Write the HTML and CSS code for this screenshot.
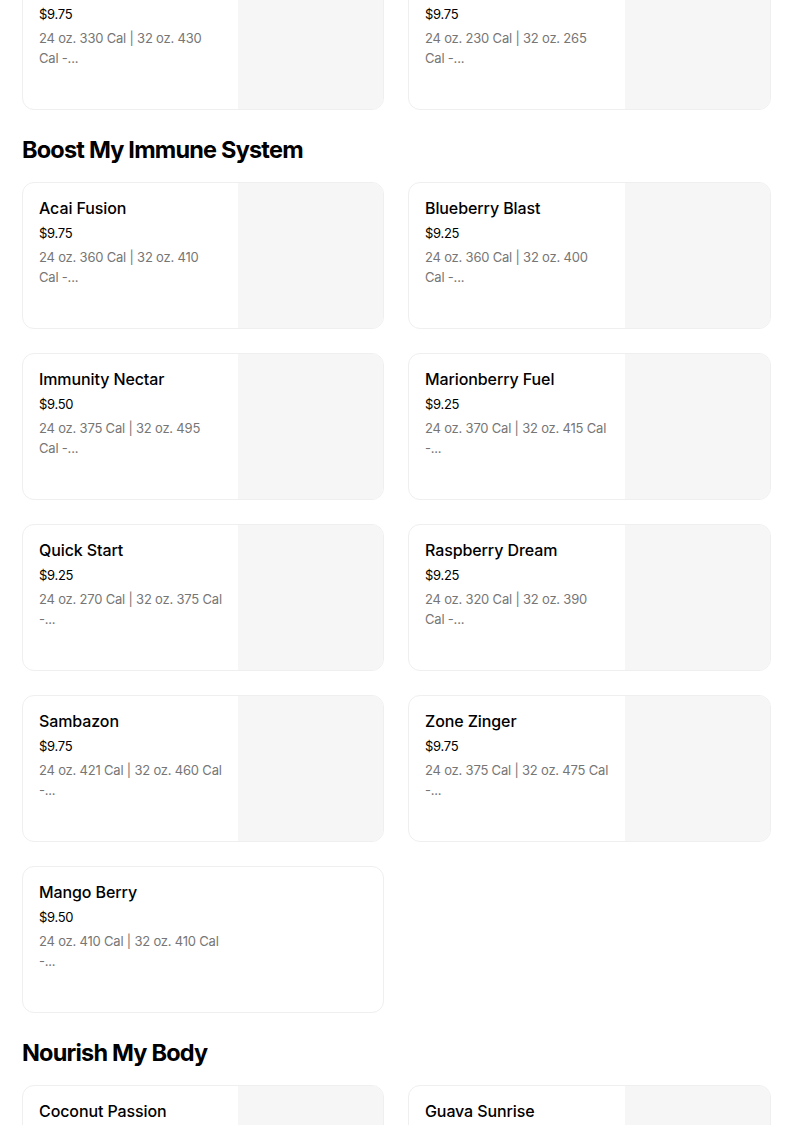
FILE: index.html
```html
<!DOCTYPE html>
<html>
<head>
<meta charset="utf-8">
<link rel="stylesheet" href="styles.css">
</head>
<body>
<main class="menu">
  <div class="grid">
    <div class="card"><div class="info"><div class="name">Strawberry Wave</div><div class="price">$9.75</div><div class="desc">24 oz. 330 Cal | 32 oz. 430<br>Cal -...</div></div><div class="thumb"></div></div>
    <div class="card"><div class="info"><div class="name">Peach Perfection</div><div class="price">$9.75</div><div class="desc">24 oz. 230 Cal | 32 oz. 265<br>Cal -...</div></div><div class="thumb"></div></div>
  </div>

  <h2 class="section-title">Boost My Immune System</h2>
  <div class="grid">
    <div class="card"><div class="info"><div class="name">Acai Fusion</div><div class="price">$9.75</div><div class="desc">24 oz. 360 Cal | 32 oz. 410<br>Cal -...</div></div><div class="thumb"></div></div>
    <div class="card"><div class="info"><div class="name">Blueberry Blast</div><div class="price">$9.25</div><div class="desc">24 oz. 360 Cal | 32 oz. 400<br>Cal -...</div></div><div class="thumb"></div></div>
    <div class="card"><div class="info"><div class="name">Immunity Nectar</div><div class="price">$9.50</div><div class="desc">24 oz. 375 Cal | 32 oz. 495<br>Cal -...</div></div><div class="thumb"></div></div>
    <div class="card"><div class="info"><div class="name">Marionberry Fuel</div><div class="price">$9.25</div><div class="desc">24 oz. 370 Cal | 32 oz. 415 Cal<br>-...</div></div><div class="thumb"></div></div>
    <div class="card"><div class="info"><div class="name">Quick Start</div><div class="price">$9.25</div><div class="desc">24 oz. 270 Cal | 32 oz. 375 Cal<br>-...</div></div><div class="thumb"></div></div>
    <div class="card"><div class="info"><div class="name">Raspberry Dream</div><div class="price">$9.25</div><div class="desc">24 oz. 320 Cal | 32 oz. 390<br>Cal -...</div></div><div class="thumb"></div></div>
    <div class="card"><div class="info"><div class="name">Sambazon</div><div class="price">$9.75</div><div class="desc">24 oz. 421 Cal | 32 oz. 460 Cal<br>-...</div></div><div class="thumb"></div></div>
    <div class="card"><div class="info"><div class="name">Zone Zinger</div><div class="price">$9.75</div><div class="desc">24 oz. 375 Cal | 32 oz. 475 Cal<br>-...</div></div><div class="thumb"></div></div>
    <div class="card"><div class="info"><div class="name">Mango Berry</div><div class="price">$9.50</div><div class="desc">24 oz. 410 Cal | 32 oz. 410 Cal<br>-...</div></div></div>
  </div>

  <h2 class="section-title">Nourish My Body</h2>
  <div class="grid">
    <div class="card"><div class="info"><div class="name">Coconut Passion</div><div class="price">$9.75</div><div class="desc">24 oz. 400 Cal | 32 oz. 520<br>Cal -...</div></div><div class="thumb"></div></div>
    <div class="card"><div class="info"><div class="name">Guava Sunrise</div><div class="price">$9.25</div><div class="desc">24 oz. 390 Cal | 32 oz. 500<br>Cal -...</div></div><div class="thumb"></div></div>
  </div>
</main>
</body>
</html>
```
FILE: styles.css
```css
html, body {
  margin: 0;
  padding: 0;
  background: #ffffff;
}
body {
  font-family: "Inter", "Roboto", "Liberation Sans", sans-serif;
  color: #000;
  overflow: hidden;
}
.menu {
  width: 749px;
  margin: -37px 0 0 22px;
}
.grid {
  display: grid;
  grid-template-columns: 362px 363px;
  column-gap: 24px;
  row-gap: 24px;
}
.card {
  height: 147px;
  box-sizing: border-box;
  border: 1px solid #efefef;
  border-radius: 12px;
  display: flex;
  overflow: hidden;
  background: #fff;
}
.info {
  flex: 1;
  padding: 14px 12px 0 16px;
  min-width: 0;
}
.thumb {
  width: 145px;
  flex: none;
  background: #f6f6f6;
}
.name {
  font-size: 16px;
  font-weight: 500;
  line-height: 22px;
  height: 22px;
  letter-spacing: -0.1px;
  white-space: nowrap;
}
.price {
  font-size: 13px;
  line-height: 20px;
  margin-top: 4px;
  letter-spacing: -0.3px;
}
.desc {
  font-size: 13px;
  line-height: 20px;
  margin-top: 4px;
  color: #767676;
  letter-spacing: -0.2px;
  white-space: nowrap;
}
.section-title {
  margin: 24px 0 16px;
  font-size: 23.5px;
  line-height: 32px;
  font-weight: 700;
  letter-spacing: -0.8px;
}
```
